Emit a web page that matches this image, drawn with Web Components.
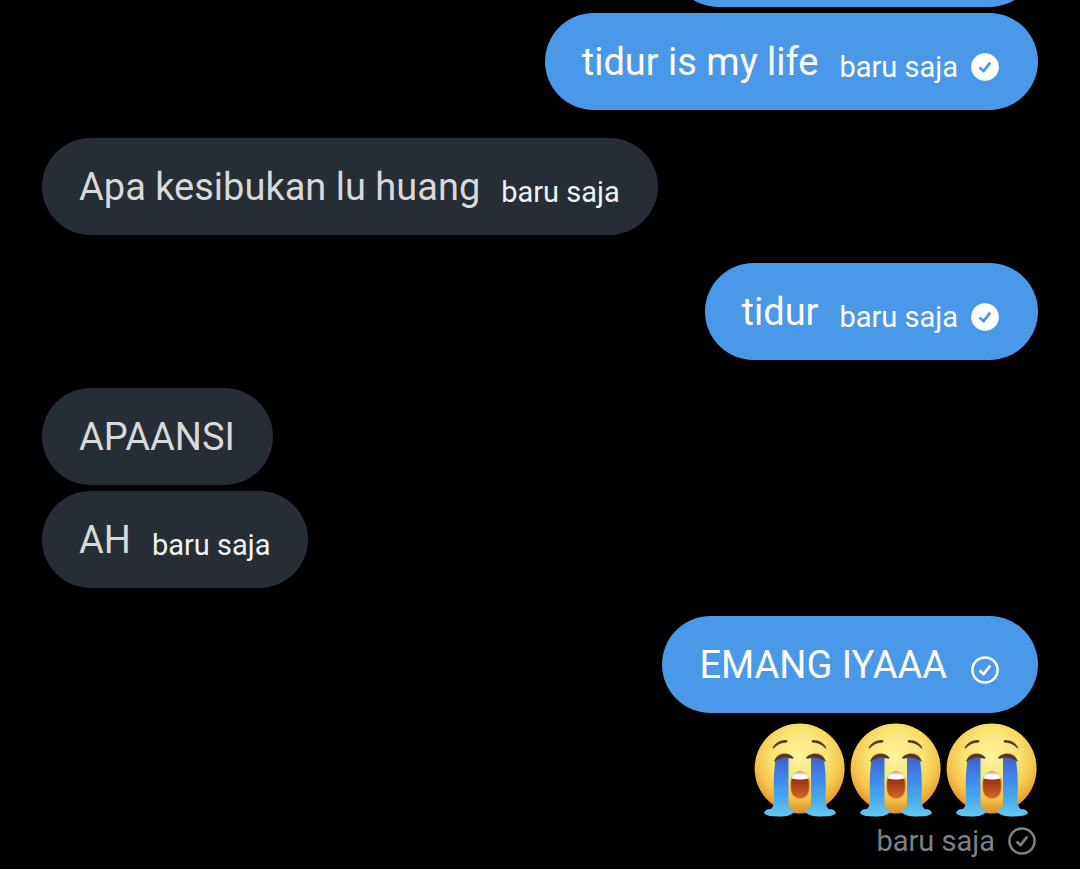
<!DOCTYPE html>
<html lang="id">
<head>
<meta charset="utf-8">
<meta name="viewport" content="width=device-width, initial-scale=1">
<title>Pesan</title>
<style>
html, body { margin: 0; background: #000; }
body { font-family: Roboto, "Liberation Sans", sans-serif; }
</style>
</head>
<body>
<chat-thread>
  <chat-group side="out">
    <chat-bubble side="out" class="earlier"></chat-bubble>
    <chat-bubble side="out">tidur is my life<message-meta slot="meta" status="read">baru saja</message-meta></chat-bubble>
  </chat-group>
  <chat-group>
    <chat-bubble>Apa kesibukan lu huang<message-meta slot="meta">baru saja</message-meta></chat-bubble>
  </chat-group>
  <chat-group side="out">
    <chat-bubble side="out">tidur<message-meta slot="meta" status="read">baru saja</message-meta></chat-bubble>
  </chat-group>
  <chat-group>
    <chat-bubble>APAANSI</chat-bubble>
    <chat-bubble>AH<message-meta slot="meta">baru saja</message-meta></chat-bubble>
  </chat-group>
  <chat-group side="out">
    <chat-bubble side="out">EMANG IYAAA<message-meta slot="meta" status="sent"></message-meta></chat-bubble>
    <emoji-message count="3"><message-meta status="sent">baru saja</message-meta></emoji-message>
  </chat-group>
</chat-thread>
<script>
const define = (name, html, setup) => {
  const template = document.createElement("template");
  template.innerHTML = html;
  customElements.define(name, class extends HTMLElement {
    constructor() {
      super();
      this.attachShadow({ mode: "open" }).append(template.content.cloneNode(true));
    }
    connectedCallback() { if (setup) setup(this, this.shadowRoot); }
  });
};

/* The thread stays scrolled to its newest message. */
define("chat-thread", `
<style>
  :host { display: flex; flex-direction: column; justify-content: flex-end; gap: 28px;
    height: 100vh; box-sizing: border-box; padding: 0 42px 10px; overflow: hidden; background: #000; }
</style><slot></slot>`);

define("chat-group", `
<style>
  :host { display: flex; flex-direction: column; align-items: flex-start; gap: 6px; flex: none; }
  :host([side="out"]) { align-items: flex-end; }
</style><slot></slot>`);

define("chat-bubble", `
<style>
  :host { display: flex; align-items: center; gap: 21px; box-sizing: border-box; max-width: 100%;
    min-height: 97px; padding: 24px 38px 24px 37px; border-radius: 49px;
    background: #262d34; color: #d9d9d9; font-size: 38px; line-height: 48px; --meta: #f1f4f6; }
  :host([side="out"]) { padding-right: 39px; background: #4a99e9; color: #fff; --meta: #fff; }
  :host(.earlier) { width: 368px; }
  ::slotted(message-meta) { padding-top: 10px; }
</style><span><slot></slot></span><slot name="meta"></slot>`);

define("message-meta", `
<style>
  :host { display: flex; align-items: center; gap: 13px; flex: none;
    color: var(--meta); font-size: 29px; line-height: 36px; }
  svg { display: none; width: 28px; height: 28px; }
  :host([status]) svg { display: block; }
  span[hidden] { display: none; }
  span[hidden] + svg { margin: 4px 0 4px 3px; }
  .ring { fill: none; stroke: currentColor; stroke-width: 2.5; }
  .tick { fill: none; stroke: currentColor; stroke-width: 2.7; }
  :host([status="read"]) .ring { fill: currentColor; }
  :host([status="read"]) .tick { stroke: #4a99e9; }
</style><span><slot></slot></span>
<svg viewBox="0 0 28 28" aria-hidden="true"><circle class="ring" cx="14" cy="14" r="12.6"/><path class="tick" d="M8.5 14.4 12.6 18 19.2 9.6"/></svg>`,
(el, root) => { root.querySelector("span").hidden = !el.textContent.trim(); });

const face = `<svg viewBox="0 0 96 104" role="img" aria-label="menangis keras">
<defs>
<radialGradient id="skin" cx=".5" cy=".36" r=".66"><stop offset="0" stop-color="#fff3a0"/><stop offset=".45" stop-color="#fbe374"/><stop offset=".72" stop-color="#f3c64c"/><stop offset="1" stop-color="#dc8a25"/></radialGradient>
<linearGradient id="tear" x1="0" y1="0" x2="0" y2="1"><stop offset="0" stop-color="#3f5fd0"/><stop offset=".3" stop-color="#3c82e6"/><stop offset=".7" stop-color="#4aa9ec"/><stop offset="1" stop-color="#62c9f3"/></linearGradient>
<linearGradient id="mouth" x1="0" y1="0" x2="0" y2="1"><stop offset="0" stop-color="#7c2a12"/><stop offset=".45" stop-color="#a83c18"/><stop offset="1" stop-color="#d5672b"/></linearGradient>
<linearGradient id="teeth" x1="0" y1="0" x2="0" y2="1"><stop offset="0" stop-color="#a5a493"/><stop offset=".5" stop-color="#fff"/></linearGradient>
</defs>
<circle cx="47.600" cy="49.500" r="45" fill="url(#skin)"/>
<g fill="#63351a">
<path d="M20.500 29Q25 20.500 34.500 21Q36.500 22.500 34.500 23.500Q27 23.500 21.500 29.500Z"/>
<path d="M74.500 29Q70 20.500 60.500 21Q58.500 22.500 60.500 23.500Q68 23.500 73.500 29.500Z"/>
</g>
<path d="M23.500 41Q30 37.500 36.500 38.500L36.500 88Q42 90 41.500 94Q36 98 27 97.500Q14 97.500 12 94Q13 90 19 90Q22 88 22 77Q21 56 23.500 41Z" fill="url(#tear)"/>
<path d="M72 41Q65 37.500 59 38.500L59 88Q53.500 90 54 94Q60 98 69 97.500Q82 97.500 84 94Q83 90 76.500 90Q73.500 88 73.500 77Q74.500 56 72 41Z" fill="url(#tear)"/>
<g fill="#63351a">
<path d="M22 43C24.500 33 36 32 41.500 38.500Q42 40 39 39.500Q30 37 22 43Z"/>
<path d="M74 43C71.500 33 60 32 54 38.500Q53.500 40 57 39.500Q65 37 74 43Z"/>
</g>
<path d="M38.700 64C38.700 49 57.300 49 57.300 64V69C57.300 83 38.700 83 38.700 69Z" fill="url(#mouth)" stroke="#eaa03e" stroke-width="1"/>
<path d="M39.500 59.500C41 50 55 50 56.500 59.500Q48 61.500 39.500 59.500Z" fill="url(#teeth)"/>
</svg>`;

define("emoji-message", `
<style>
  :host { display: flex; flex-direction: column; align-items: flex-end; --meta: #7b8187; }
  .row { display: flex; margin-right: -2px; }
  .row svg { width: 96px; height: 104px; display: block; }
  .meta { display: block; padding-right: 2px; }
</style><div class="row"></div><div class="meta"><slot></slot></div>`,
(el, root) => { root.querySelector(".row").innerHTML = face.repeat(Number(el.getAttribute("count"))); });
</script>
</body>
</html>
